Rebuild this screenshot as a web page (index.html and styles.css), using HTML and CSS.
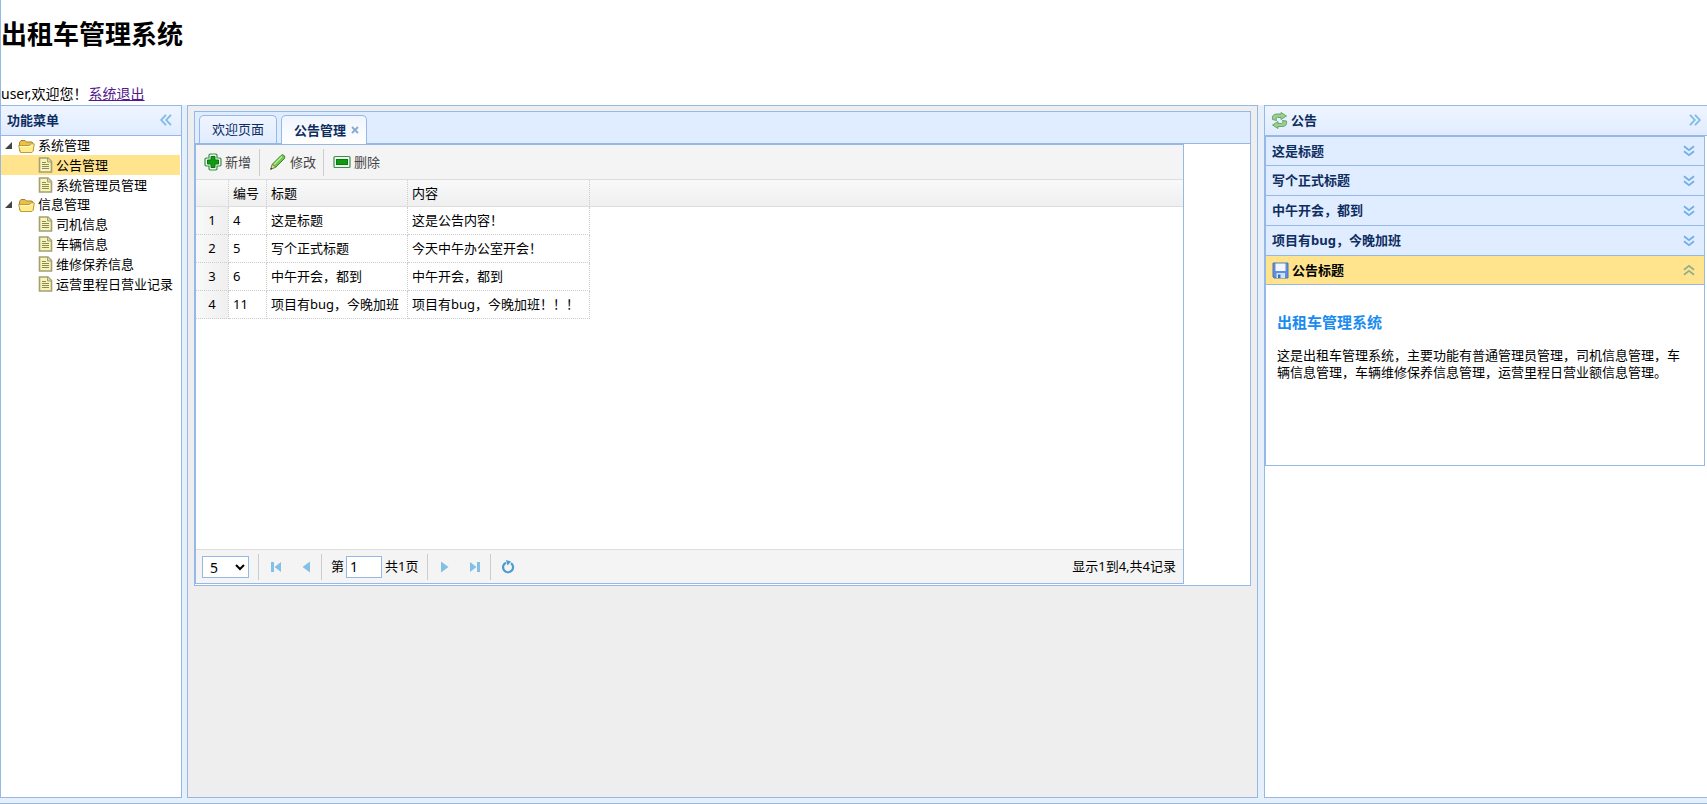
FILE: index.html
```html
<!DOCTYPE html>
<html lang="zh-CN">
<head>
	<meta charset="utf-8">
	<title>出租车管理系统</title>
	<link rel="stylesheet" href="styles.css">
</head>
<body>
	<!-- 公用图标 -->
	<svg class="defs" aria-hidden="true">
		<symbol id="i-folder" viewBox="0 0 17 16">
			<path d="M1.500 13V4.500L3 2.500h4l1.500 1.500h5.500l1 1.500v7.500z" fill="#e9c04a" stroke="#a8802c"/>
			<path d="M2.500 14.500L.6 7.500h11l1.200-1.500h3.500l-1.300 7.500-1 1z" fill="#ffec8a" stroke="#c09a3c"/>
			<path d="M2 8.500h10l1.200-1.500h2" fill="none" stroke="#fff8cc"/>
		</symbol>
		<symbol id="i-file" viewBox="0 0 15 16">
			<path d="M1.500 1h8.500l3.500 3.500v10.500h-12z" fill="#f7f5b8" stroke="#a3a073" stroke-width="1.600"/>
			<path d="M9.500 1v4h4" fill="#d9d6a4" stroke="#a3a073"/>
			<path d="M4 5.500h4M4 7.500h7M4 9.500h7M4 11.500h7" stroke="#8d8a5a"/>
		</symbol>
		<symbol id="i-dleft" viewBox="0 0 12 12">
			<path d="M6 .8L1.200 6L6 11.200M11 .8L6.200 6L11 11.200" fill="none" stroke="#7dbae8" stroke-width="1.800"/>
		</symbol>
		<symbol id="i-ddown" viewBox="0 0 12 12">
			<path d="M1 1.200L6 5.200L11 1.200M1 6.200L6 10.200L11 6.200" fill="none" stroke="currentColor" stroke-width="1.800"/>
		</symbol>
	</svg>

	<header class="north">
		<h1>出租车管理系统</h1>
		<div class="welcome">user,欢迎您！<a href="#">系统退出</a></div>
	</header>

	<div class="layout">
		<!-- 左侧菜单 -->
		<nav class="west">
			<div class="panel-header">
				<span class="panel-title">功能菜单</span>
				<button class="tool" type="button" aria-label="收起"><svg width="12" height="12"><use href="#i-dleft"/></svg></button>
			</div>
			<ul class="tree">
				<li>
					<div class="node"><i class="arrow"></i><svg width="17" height="16"><use href="#i-folder"/></svg><span>系统管理</span></div>
					<ul>
						<li><a class="node leaf selected" href="#"><svg width="15" height="16"><use href="#i-file"/></svg>公告管理</a></li>
						<li><a class="node leaf" href="#"><svg width="15" height="16"><use href="#i-file"/></svg>系统管理员管理</a></li>
					</ul>
				</li>
				<li>
					<div class="node"><i class="arrow"></i><svg width="17" height="16"><use href="#i-folder"/></svg><span>信息管理</span></div>
					<ul>
						<li><a class="node leaf" href="#"><svg width="15" height="16"><use href="#i-file"/></svg>司机信息</a></li>
						<li><a class="node leaf" href="#"><svg width="15" height="16"><use href="#i-file"/></svg>车辆信息</a></li>
						<li><a class="node leaf" href="#"><svg width="15" height="16"><use href="#i-file"/></svg>维修保养信息</a></li>
						<li><a class="node leaf" href="#"><svg width="15" height="16"><use href="#i-file"/></svg>运营里程日营业记录</a></li>
					</ul>
				</li>
			</ul>
		</nav>

		<!-- 中间内容 -->
		<main class="center">
			<div class="tabs">
				<div class="tabs-header">
					<div class="tab"><button type="button">欢迎页面</button></div>
					<div class="tab active">
						<button type="button">公告管理</button>
						<button class="close" type="button" aria-label="关闭"><svg width="8" height="8" viewBox="0 0 8 8"><path d="M1 1l6 6M7 1l-6 6" stroke="#8aa9d0" stroke-width="1.800"/></svg></button>
					</div>
				</div>
				<div class="tabs-body">
					<div class="datagrid">
						<div class="toolbar">
							<button type="button">
								<svg width="18" height="18" viewBox="0 0 18 18"><path d="M6 1h6l1 1v3h3l1 1v6l-1 1h-3v3l-1 1h-6l-1-1v-3H2l-1-1V6l1-1h3V2z" fill="#eef8ee" stroke="#3c8f48" stroke-width="1.200"/><path d="M7 3.500h4V7h3.500v4H11v3.500H7V11H3.500V7H7z" fill="#119a12" stroke="#087a0a"/></svg>新增
							</button>
							<button type="button">
								<svg width="18" height="18" viewBox="0 0 18 18"><path d="M2 16l1.500-5L12 2.500q1.500-1.500 3 0t.5 3L7 14z" fill="#72c54b" stroke="#3d8a2e"/><path d="M5 11.500l8-8" stroke="#b9ec9c" stroke-width="1.500"/><path d="M1.500 16.500l1.600-5q2 .5 3.400 2.700z" fill="#e8d49a" stroke="#5d7a36" stroke-width=".7"/><path d="M1.500 16.500l.7-2 1.300 1.300z" fill="#333"/></svg>修改
							</button>
							<button type="button">
								<svg width="18" height="18" viewBox="0 0 18 18"><rect x="1" y="3.500" width="16" height="11" rx="1" fill="#eef8ee" stroke="#3c8f48" stroke-width="1.200"/><rect x="3.500" y="6.500" width="11" height="5" fill="#119a12" stroke="#087a0a"/></svg>删除
							</button>
						</div>
						<div class="grid-view">
							<table>
								<colgroup><col class="c-num"><col class="c-id"><col class="c-title"><col class="c-text"><col></colgroup>
								<thead>
									<tr><th></th><th>编号</th><th>标题</th><th>内容</th><th class="rest"></th></tr>
								</thead>
								<tbody>
									<tr><td class="num">1</td><td>4</td><td>这是标题</td><td>这是公告内容！</td></tr>
									<tr><td class="num">2</td><td>5</td><td>写个正式标题</td><td>今天中午办公室开会！</td></tr>
									<tr><td class="num">3</td><td>6</td><td>中午开会，都到</td><td>中午开会，都到</td></tr>
									<tr><td class="num">4</td><td>11</td><td>项目有bug，今晚加班</td><td>项目有bug，今晚加班！！！</td></tr>
								</tbody>
							</table>
						</div>
						<div class="pager">
							<select aria-label="每页条数"><option>5</option><option>10</option><option>20</option></select>
							<i class="sep"></i>
							<button type="button" aria-label="首页"><svg width="12" height="12" viewBox="0 0 12 12"><path d="M1 1h3v10H1zM11 1v10L4.500 6z" fill="#82c0e6"/></svg></button>
							<button type="button" aria-label="上一页"><svg width="12" height="12" viewBox="0 0 12 12"><path d="M10 .5v11L2.500 6z" fill="#82c0e6"/></svg></button>
							<i class="sep"></i>
							<label for="page">第</label>
							<input id="page" type="text" value="1">
							<span>共1页</span>
							<i class="sep"></i>
							<button type="button" aria-label="下一页"><svg width="12" height="12" viewBox="0 0 12 12"><path d="M2 .5v11L9.500 6z" fill="#82c0e6"/></svg></button>
							<button type="button" aria-label="末页"><svg width="12" height="12" viewBox="0 0 12 12"><path d="M8 1h3v10H8zM1 1v10L7.500 6z" fill="#82c0e6"/></svg></button>
							<i class="sep"></i>
							<button type="button" aria-label="刷新"><svg width="14" height="14" viewBox="0 0 14 14"><path d="M10 3.200A5 5 0 1 1 5 2.700" fill="none" stroke="#4a9ccb" stroke-width="2.200"/><path d="M5 0l5 1.500L6.500 5.500z" fill="#4a9ccb"/></svg></button>
							<span class="info">显示1到4,共4记录</span>
						</div>
					</div>
				</div>
			</div>
		</main>

		<!-- 右侧公告 -->
		<aside class="east">
			<div class="panel-header">
				<svg width="17" height="17" viewBox="0 0 17 17"><path d="M1.500 7.500Q.5 2 6 2h4V.5L15.500 4 10 7.500V5.500H6.500Q4 6 5.500 8.500z" fill="#9ad08a" stroke="#5f9f62" stroke-width=".9"/><path d="M15.500 9q1 5.500-4.500 5.500H7v2L1.500 13 7 9.500v2h3.500q2.500-.5 1-3z" fill="#9ad08a" stroke="#5f9f62" stroke-width=".9"/></svg>
				<span class="panel-title">公告</span>
				<button class="tool flip" type="button" aria-label="收起"><svg width="12" height="12"><use href="#i-dleft"/></svg></button>
			</div>
			<div class="accordion">
				<button class="acc-header" type="button">这是标题<svg width="12" height="12"><use href="#i-ddown"/></svg></button>
				<button class="acc-header" type="button">写个正式标题<svg width="12" height="12"><use href="#i-ddown"/></svg></button>
				<button class="acc-header" type="button">中午开会，都到<svg width="12" height="12"><use href="#i-ddown"/></svg></button>
				<button class="acc-header" type="button">项目有bug，今晚加班<svg width="12" height="12"><use href="#i-ddown"/></svg></button>
				<button class="acc-header open" type="button">
					<svg class="save" width="17" height="17" viewBox="0 0 17 17"><path d="M1 1h15v15H2l-1-1z" fill="#5c8fe0" stroke="#5575a8"/><path d="M3.500 1.500h10V9h-10z" fill="#f2f7ff"/><path d="M4.500 11h8.500v5H4.500z" fill="#cfe0fa"/><path d="M6 12.500h2.500V16H6z" fill="#3f6fc4"/></svg>公告标题<svg width="12" height="12"><use href="#i-ddown"/></svg>
				</button>
				<div class="acc-body">
					<h3>出租车管理系统</h3>
					<p>这是出租车管理系统，主要功能有普通管理员管理，司机信息管理，车辆信息管理，车辆维修保养信息管理，运营里程日营业额信息管理。</p>
				</div>
			</div>
		</aside>
	</div>
</body>
</html>
```
FILE: styles.css
```css
*{
	box-sizing: border-box;
}
body{
	margin: 0;
	min-height: 100vh;
	display: flex;
	flex-direction: column;
	font: 13px/17px "Noto Sans","Noto Sans CJK SC",sans-serif;
	color: #000;
	background: #fff;
}
ul{
	margin: 0;
	padding: 0;
	list-style: none;
}
button{
	padding: 0;
	border: 0;
	background: none;
	font: inherit;
	color: inherit;
	cursor: pointer;
}
svg{
	flex: none;
}
.defs{
	position: absolute;
	width: 0;
	height: 0;
}

/* 顶部 */
.north{
	height: 105px;
	border-left: 1px solid #95b8e7;
}
h1{
	margin: 0;
	padding: 15px 0 31px;
	font-size: 26px;
	line-height: 38px;
}
.welcome{
	font-size: 14px;
	line-height: 20px;
}
.welcome a{
	margin-left: 1px;
	color: #551a8b;
}

/* 三栏布局 */
.layout{
	flex: 1;
	display: flex;
	gap: 5px;
	padding-bottom: 5px;
	background: #e6f0fa;
	border-bottom: 1px solid #95b8e7;
}
.west,
.center,
.east{
	border: 1px solid #95b8e7;
	background: #fff;
}
.west{
	width: 182px;
}
.center{
	flex: 1;
	min-width: 0;
	padding: 5px 6px;
	background: #eee;
}
.east{
	width: 443px;
	margin-left: 1px;
	border-right: 0;
}
.panel-header{
	display: flex;
	align-items: center;
	height: 30px;
	padding: 0 9px 1px 6px;
	border-bottom: 1px solid #95b8e7;
	background: linear-gradient(#eff5ff,#e0ecff);
	color: #0e2d5f;
	font-weight: bold;
}
.east .panel-header{
	gap: 3px;
	padding-right: 6px;
}
.tool{
	display: flex;
	margin-left: auto;
}
.flip{
	transform: rotate(180deg);
}

/* 菜单树 */
.node{
	display: flex;
	align-items: center;
	gap: 3px;
	height: 19px;
	padding-left: 4px;
	color: #000;
	text-decoration: none;
}
.node.leaf{
	height: 20px;
	padding-left: 37px;
}
.node.selected{
	margin-right: 1px;
	background: #ffe48d;
}
.arrow{
	width: 0;
	height: 0;
	margin-right: 3px;
	border-left: 7px solid transparent;
	border-bottom: 7px solid #444;
}

/* 选项卡 */
.tabs{
	border: 1px solid #95b8e7;
	background: #fff;
}
.tabs-header{
	display: flex;
	align-items: flex-end;
	gap: 4px;
	height: 32px;
	padding-left: 4px;
	border-bottom: 1px solid #95b8e7;
	background: #e0ecff;
}
.tab{
	display: flex;
	align-items: center;
	gap: 5px;
	height: 28px;
	padding: 0 12px;
	border: 1px solid #95b8e7;
	border-bottom: 0;
	border-radius: 5px 5px 0 0;
	background: linear-gradient(#eff5ff,#e0ecff);
	color: #0e2d5f;
}
.tab.active{
	height: 29px;
	margin-bottom: -1px;
	padding-right: 7px;
	background: linear-gradient(#eff5ff,#fff);
	font-weight: bold;
}
.close{
	display: flex;
}

/* 表格 */
.tabs-body{
	padding-bottom: 1px;
}
.datagrid{
	width: calc(100% - 66px);
	border: 1px solid #95b8e7;
}
.toolbar{
	display: flex;
	align-items: center;
	height: 35px;
	background: #f4f4f4;
	border-bottom: 1px solid #ddd;
}
.toolbar button{
	display: flex;
	align-items: center;
	gap: 3px;
	height: 27px;
	padding: 0 8px;
	border-right: 1px solid #ccc;
	color: #444;
}
.toolbar button + button{
	padding-left: 9px;
	padding-right: 7px;
}
.toolbar button:last-child{
	border-right: 0;
}
.grid-view{
	min-height: 369px;
}
table{
	width: 100%;
	table-layout: fixed;
	border-collapse: separate;
	border-spacing: 0;
}
.c-num{
	width: 33px;
}
.c-id{
	width: 38px;
}
.c-title{
	width: 141px;
}
.c-text{
	width: 182px;
}
th,
td{
	height: 28px;
	padding: 0 4px;
	border-right: 1px dotted #ccc;
	border-bottom: 1px dotted #ccc;
	text-align: left;
	font-weight: normal;
	white-space: nowrap;
}
th{
	height: 27px;
	background: linear-gradient(#f9f9f9,#efefef);
	border-bottom: 1px solid #ddd;
}
th.rest{
	border-right: 0;
}
td.num{
	background: linear-gradient(to right,#f9f9f9,#efefef);
	text-align: center;
}

/* 分页 */
.pager{
	display: flex;
	align-items: center;
	height: 34px;
	padding: 0 7px 0 6px;
	background: #f4f4f4;
	border-top: 1px solid #ddd;
}
.pager select,
.pager input{
	height: 22px;
	border: 1px solid #95b8e7;
	background: #fff;
	font: 14px "Noto Sans",sans-serif;
	color: #000;
}
.pager select{
	width: 47px;
	padding: 0 0 0 3px;
}
.pager input{
	width: 36px;
	padding: 0 3px;
	margin: 0 3px 0 2px;
}
.pager button{
	display: flex;
	justify-content: center;
	width: 22px;
	margin: 0 4px;
}
.pager .sep{
	height: 26px;
	margin: 0 2px 0 9px;
	border-left: 1px solid #ccc;
}
.pager button + .sep{
	margin-left: 0;
}
.pager label{
	margin-left: 7px;
}
.pager .info{
	margin-left: auto;
}

/* 公告折叠面板 */
.accordion{
	margin-right: 2px;
	border: 1px solid #95b8e7;
}
.acc-header{
	display: flex;
	align-items: center;
	gap: 3px;
	width: 100%;
	height: 30px;
	padding: 0 9px 0 6px;
	border-bottom: 1px solid #95b8e7;
	background: #e0ecff;
	color: #0e2d5f;
	font-weight: bold;
}
.acc-header:first-child,
.acc-header.open{
	height: 29px;
}
.acc-header svg:last-child{
	margin-left: auto;
	color: #72aee6;
}
.acc-header.open{
	background: #ffe48d;
	color: #000;
}
.acc-header.open svg:last-child{
	color: #8fb08c;
	transform: rotate(180deg);
}
.acc-body{
	min-height: 180px;
	padding: 27px 16px 27px 11px;
}
.acc-body h3{
	margin: 0 0 15px;
	color: #1a8cf0;
	font-size: 15px;
	line-height: 20px;
}
.acc-body p{
	margin: 0;
}
```
